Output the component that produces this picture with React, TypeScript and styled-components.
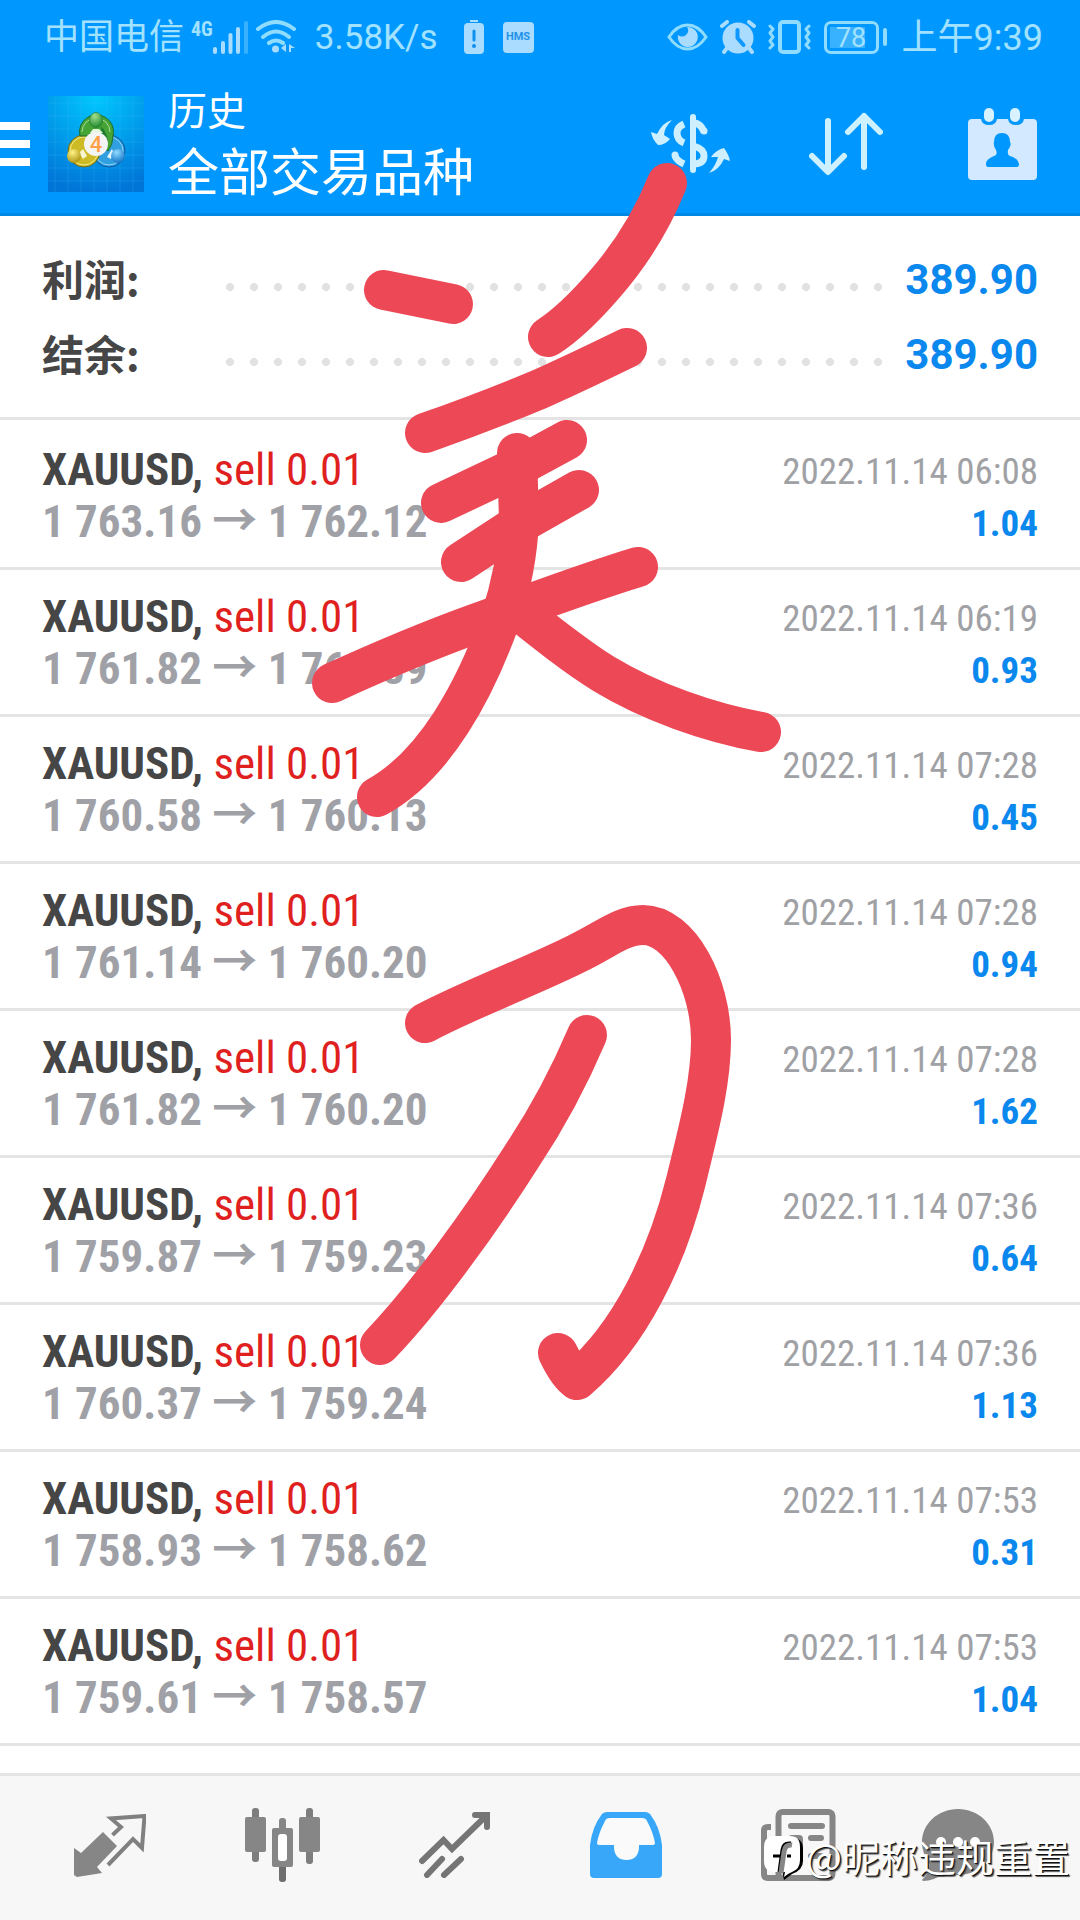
import React from "react";
import styled, { createGlobalStyle } from "styled-components";

const condensed = '"Roboto Condensed", "Liberation Sans Narrow", Roboto, "Noto Sans CJK SC", sans-serif';
const regular = 'Roboto, "Noto Sans CJK SC", sans-serif';

const GlobalStyle = createGlobalStyle`
  *, *::before, *::after { box-sizing: border-box; }
  html, body { margin: 0; padding: 0; }
  body { background: #fff; font-family: ${regular}; }
  button { margin: 0; padding: 0; border: 0; background: none; font: inherit; color: inherit; cursor: pointer; }
  svg { display: block; flex: none; }
`;

const Screen = styled.div`
  position: relative;
  display: flex;
  flex-direction: column;
  height: 100vh;
  overflow: hidden;
`;

const Header = styled.header`
  flex: none;
  background: #0098ff;
  border-bottom: 3px solid #0088e6;
  color: #fff;
`;

const StatusBar = styled.div`
  display: flex;
  align-items: center;
  justify-content: space-between;
  height: 74px;
  padding: 0 37px 0 44px;
  color: #a2e2ff;
  font-size: 36px;
  line-height: 40px;
  font-weight: 400;
`;

const StatusGroup = styled.div`
  display: flex;
  align-items: center;
  gap: 11px;
`;

const StatusIcons = styled.span`
  display: flex;
  align-items: center;
  gap: 12px;
  margin-right: 2px;
`;

const Carrier = styled.span`
  font-size: 35px;
  padding-top: 2px;
`;

const Signal = styled.span`
  display: flex;
  align-items: center;
  margin: 0 -4px 0 -4px;
`;

const Network = styled.span`
  align-self: flex-start;
  font-family: ${condensed};
  font-size: 20px;
  line-height: 18px;
  font-weight: 700;
`;

const Speed = styled.span`
  padding: 2px 15px 0 8px;
  font-size: 35px;
`;

const HmsBadge = styled.span`
  display: grid;
  place-items: center;
  width: 31px;
  height: 31px;
  margin-left: 8px;
  border-radius: 4px;
  background: #a9dcff;
  color: #1f93ea;
  font-size: 11px;
  line-height: 12px;
  font-weight: 700;
`;

const Battery = styled.span`
  display: flex;
  align-items: center;
  gap: 4px;
  &::after {
    content: "";
    width: 4px;
    height: 18px;
    border-radius: 2px;
    background: #8fdcff;
  }
`;

const BatteryCell = styled.span`
  width: 55px;
  height: 33px;
  border: 3px solid #8fdcff;
  border-radius: 7px;
  padding: 0 3px;
  background: linear-gradient(#38b1ff, #38b1ff) 3px 3px / 35px 21px no-repeat;
  text-align: center;
  font-size: 27px;
  line-height: 28px;
`;

const Clock = styled.time`
  margin-left: 4px;
  padding-top: 2px;
  font-size: 36px;
`;

const Toolbar = styled.div`
  display: flex;
  align-items: center;
  height: 139px;
`;

const MenuButton = styled.button`
  display: grid;
  gap: 10px;
  width: 30px;
  margin-right: 18px;
`;

const MenuBar = styled.span`
  height: 8px;
  background: #fff;
`;

const Titles = styled.div`
  display: flex;
  flex-direction: column;
  flex: 1;
  margin-left: 24px;
  padding-top: 4px;
`;

const Subtitle = styled.span`
  font-size: 39px;
  line-height: 56px;
`;

const Title = styled.h1`
  margin: 0;
  font-size: 51px;
  line-height: 68px;
  font-weight: 400;
`;

const Actions = styled.div`
  display: grid;
  grid-template-columns: repeat(3, 156px);
`;

const ActionButton = styled.button`
  display: grid;
  place-items: center;
`;

const Main = styled.main`
  flex: 1;
  min-height: 0;
  overflow: hidden;
`;

const Summary = styled.dl`
  margin: 0;
  padding: 26px 42px 25px;
  border-bottom: 3px solid #e4e4e4;
`;

const SummaryRow = styled.div`
  display: flex;
  align-items: center;
  height: 75px;
  font-size: 42px;
  line-height: 48px;
  font-weight: 700;
`;

const SummaryLabel = styled.dt`
  width: 176px;
  padding-bottom: 4px;
  color: #464646;
  font-family: "Noto Sans CJK SC", sans-serif;
`;

const Dots = styled.span`
  flex: 1;
  height: 8px;
  margin: 15px 16px 0 0;
  background: radial-gradient(circle, #e2e2e2 4px, transparent 4px) 0 0 / 24px 8px repeat-x;
`;

const SummaryValue = styled.dd`
  margin: 0;
  color: #0a88ee;
`;

const Deals = styled.ul`
  margin: 0;
  padding: 3px 0 0;
  list-style: none;
`;

const Deal = styled.li`
  display: flex;
  justify-content: space-between;
  height: 147px;
  padding: 21px 42px 0;
  border-bottom: 3px solid #e4e4e4;
  font-family: ${condensed};
`;

const DealColumn = styled.div<{ $end?: boolean }>`
  display: flex;
  flex-direction: column;
  align-items: ${(p) => (p.$end ? "flex-end" : "flex-start")};
  font-size: ${(p) => (p.$end ? 37 : 45)}px;
  line-height: 52px;
  white-space: nowrap;
  padding-top: ${(p) => (p.$end ? 2 : 0)}px;
`;

const Symbol = styled.span`
  color: #464646;
  font-weight: 700;
`;

const Side = styled.span`
  color: #e01f1f;
`;

const Prices = styled.span`
  color: #a0a1a7;
  font-weight: 700;
`;

const DateText = styled.time`
  color: #a0a1a5;
`;

const Profit = styled.span`
  color: #0a88ee;
  font-weight: 700;
`;

const Nav = styled.nav`
  flex: none;
  display: grid;
  grid-template-columns: repeat(5, 172fr) 148fr;
  height: 147px;
  padding: 0 48px 6px 24px;
  border-top: 3px solid #e4e4e4;
  background: #f7f7f7;
`;

const NavButton = styled.button`
  display: grid;
  place-items: center;
`;

const Drawing = styled.svg`
  position: absolute;
  top: 0;
  left: 0;
  pointer-events: none;
`;

const Watermark = styled.div`
  position: absolute;
  right: 10px;
  bottom: 42px;
  display: flex;
  align-items: center;
  gap: 3px;
  height: 40px;
  color: #fff;
  font-family: "Noto Sans CJK SC", sans-serif;
  font-size: 38px;
  line-height: 40px;
  text-shadow: 1px 1px 0 #111, 2px 2px 1px #555;
`;

const WatermarkText = styled.span`
  padding-bottom: 4px;
`;

const WifiIcon = () => (
  <svg width="40" height="34" viewBox="0 0 40 34" fill="none" stroke="#8fdcff" strokeWidth="4" strokeLinecap="round">
    <path d="M2 9Q20 -5 38 9M7 17Q20 6 33 17M13 23Q20 18 27 23" />
    <circle cx="19.500" cy="29" r="3.500" fill="#a9dcff" stroke="none" />
    <path d="M30 24v8l-5-4zM33 24l6 4h-4v4h-2z" fill="#a9dcff" stroke="none" />
  </svg>
);

const SignalIcon = () => (
  <svg width="36" height="34" viewBox="0 0 36 34" stroke="#a9dcff" strokeWidth="4" strokeLinecap="round">
    <path d="M2 29v3M10 23v9M17.500 15v17M25 9v23" />
    <path d="M33 3v29" stroke="#38b1ff" />
  </svg>
);

const BatteryAlertIcon = () => (
  <svg width="20" height="34" viewBox="0 0 20 34">
    <path d="M6 0h8v2H6z" fill="#a9dcff" />
    <rect x="0" y="3" width="20" height="31" rx="4" fill="#a9dcff" />
    <path d="M10 11v9" stroke="#0f8fee" strokeWidth="3" strokeLinecap="round" />
    <circle cx="10" cy="26" r="2" fill="#0f8fee" />
  </svg>
);

const EyeIcon = () => (
  <svg width="41" height="28" viewBox="0 0 41 28">
    <path d="M2 14Q10 2 20.500 2T39 14Q31 26 20.500 26T2 14Z" fill="none" stroke="#8fdcff" strokeWidth="3" />
    <path d="M20 4a10 10 0 1 1-9 8q4 3 8 0q4-4 1-8z" fill="#a9dcff" />
  </svg>
);

const AlarmIcon = () => (
  <svg width="36" height="34" viewBox="0 0 36 34">
    <path d="M2 6l5-4M34 6l-5-4M7 28l-3 4M29 28l3 4" stroke="#a9dcff" strokeWidth="4" strokeLinecap="round" />
    <circle cx="18" cy="18" r="15.500" fill="#a9dcff" />
    <path d="M17.500 10v8l6 7" fill="none" stroke="#0f98ff" strokeWidth="4" strokeLinecap="round" strokeLinejoin="round" />
  </svg>
);

const VibrateIcon = () => (
  <svg width="43" height="34" viewBox="0 0 43 34" fill="none" stroke="#8fdcff" strokeLinejoin="round" strokeLinecap="round">
    <rect x="12" y="2" width="19" height="30" rx="3" strokeWidth="4" />
    <path d="M2 6l3 3-3 4 3 4-3 4 3 4-3 3M41 6l-3 3 3 4-3 4 3 4-3 4 3 3" strokeWidth="3" />
  </svg>
);

const LogoIcon = () => (
  <svg width="96" height="96" viewBox="0 0 96 96">
    <defs>
      <radialGradient id="sky" cx="50%" cy="0%" r="100%">
        <stop offset="0" stopColor="#00c8ff" />
        <stop offset="1" stopColor="#0075d8" />
      </radialGradient>
      <radialGradient id="green" cx="40%" cy="25%" r="80%">
        <stop offset="0" stopColor="#a5e08e" />
        <stop offset="1" stopColor="#18862a" />
      </radialGradient>
      <radialGradient id="yellow" cx="40%" cy="25%" r="80%">
        <stop offset="0" stopColor="#fff385" />
        <stop offset="1" stopColor="#a88f0c" />
      </radialGradient>
      <radialGradient id="blue" cx="40%" cy="25%" r="80%">
        <stop offset="0" stopColor="#8fdcff" />
        <stop offset="1" stopColor="#0b6fc4" />
      </radialGradient>
    </defs>
    <path d="M0 0h96v96H0z" fill="url(#sky)" />
    <path d="M7 0v96M20 0v96M33 0v96M46 0v96M59 0v96M72 0v96M85 0v96M0 7h96M0 20h96M0 33h96M0 46h96M0 59h96M0 72h96M0 85h96" stroke="#4cc4ff" strokeOpacity=".2" />
    <circle cx="61" cy="55" r="16" fill="#2f9fe0" stroke="#0c579e" />
    <circle cx="61" cy="55" r="14" fill="none" stroke="#8fd3f7" />
    <circle cx="36" cy="55" r="16" fill="#cdbb25" stroke="#6d6a1a" />
    <circle cx="36" cy="55" r="14" fill="none" stroke="#f2ea8a" />
    <path d="M32 40a17 17 0 1 1 33 0q0 8-5 15L42 40z" fill="#46a437" stroke="#1c6d2a" />
    <path d="M34 36a14 14 0 0 1 28 0" fill="none" stroke="#a8de95" />
    <path d="M53 30q8 8 7 22l-6-14z" fill="#1e7a2d" />
    <path d="M45 33h6l4 4H42z" fill="#e3f7dc" />
    <path d="M31 57l4-4 4 7-4 3z" fill="#f7f4d0" />
    <path d="M59 61l5-8 2 5-3 5z" fill="#e3f4fd" />
    <ellipse cx="48" cy="24" rx="6.500" ry="7.500" fill="url(#green)" stroke="#1c6d2a" strokeWidth=".5" />
    <circle cx="26" cy="60" r="7" fill="url(#yellow)" />
    <circle cx="70" cy="60" r="7" fill="url(#blue)" />
    <circle cx="48" cy="48" r="12" fill="#f4f4f5" />
    <text x="48" y="56" textAnchor="middle" fontFamily="Roboto, sans-serif" fontSize="22" fontWeight="500" fill="#ff9f45">4</text>
  </svg>
);

const CurrencyIcon = () => (
  <svg width="79" height="61" viewBox="0 0 79 61" fill="#cdefff">
    <path d="M42 4v53" stroke="#cdefff" strokeWidth="6" strokeLinecap="round" />
    <path d="M33 11Q26 14 26 20Q26 27 33 30M44 10Q50 11 53 19M44 33.500Q53 36 53 43T44 51" fill="none" stroke="#cdefff" strokeWidth="7" />
    <path d="M24 43Q26 48 33 51" fill="none" stroke="#cdefff" strokeWidth="7" />
    <circle cx="24" cy="42" r="3.500" />
    <circle cx="53" cy="18" r="3.500" />
    <path d="M21 7Q13 15 13 22l6 4Q14 32 7 32 1 26 0 19l6 2Q12 9 21 7zM58 60q7-8 9-16l-7 0q5-7 13-9 5 7 6 13l-6-2Q68 57 58 60z" />
  </svg>
);

const SortIcon = () => (
  <svg width="74" height="64" viewBox="0 0 74 64" fill="none" stroke="#cdf1ff" strokeWidth="6" strokeLinecap="round" strokeLinejoin="round">
    <path d="M19 9v50M3 44l16 16 16-16M55 55V4M39 20L55 4l16 16" />
  </svg>
);

const CalendarIcon = () => (
  <svg width="69" height="72" viewBox="0 0 69 72">
    <path d="M4 11h9q1 6 8 6t8-6h11q1 6 8 6t8-6h9q4 0 4 4v53q0 4-4 4H4q-4 0-4-4V15q0-4 4-4z" fill="#d3e9ff" />
    <rect x="16" y="0" width="10" height="14" rx="5" fill="#d8f2ff" />
    <rect x="42" y="0" width="10" height="14" rx="5" fill="#d8f2ff" />
    <path d="M34 25q8 0 8 9 2 3-2 8-1 5 2 6 9 3 9 8 0 3-2 3H20q-2 0-2-3 0-5 8-8 4-1 2-6-3-5-2-8 0-9 8-9z" fill="#0098ff" />
  </svg>
);

const TradeIcon = () => (
  <svg width="72" height="63" viewBox="0 0 72 63">
    <path d="M0 34l7 5 22-21 14 14-20 21 5 6-25 4-3-2z" fill="#868686" />
    <path d="M38.500 21l8.500-8-10-8.500L70.500 2 68 34l-9-9-25 26" fill="none" stroke="#808080" strokeWidth="4" />
  </svg>
);

const CandlesIcon = () => (
  <svg width="75" height="74" viewBox="0 0 75 74" fill="#868686">
    <rect x="7" y="0" width="7" height="54" rx="3" fill="#7d7d7d" />
    <rect x="61" y="0" width="7" height="56" rx="3" fill="#7d7d7d" />
    <rect x="34" y="10" width="7" height="14" rx="3" />
    <rect x="34" y="55" width="7" height="19" rx="3" fill="#6e6e6e" />
    <rect x="0" y="9" width="21" height="35" rx="2" />
    <rect x="54" y="9" width="21" height="35" rx="2" />
    <rect x="27" y="20" width="21" height="39" rx="2" />
    <rect x="33" y="26" width="9" height="27" rx="3" fill="#fff" />
  </svg>
);

const TrendIcon = () => (
  <svg width="71" height="66" viewBox="0 0 71 66" fill="none" stroke="#757575" strokeWidth="6" strokeLinecap="round">
    <path d="M3 49l21.500-21L33 37 68 3M56 3h12v12M8 63l15-16M25 63l17-16" />
  </svg>
);

const InboxIcon = () => (
  <svg width="72" height="66" viewBox="0 0 72 66">
    <path d="M0 33Q2 15 12 2q2-2 5-2h38q3 0 5 2 10 13 12 31v29q0 4-4 4H4q-4 0-4-4z" fill="#38a7fa" />
    <path d="M7 31q2-11 8-22 1-3 5-3h32q4 0 5 3 6 11 8 22 0 2-2 2H49v3q-1 12-12.500 12T24 36v-3H9q-2 0-2-2z" fill="#fafafa" />
  </svg>
);

const NewsIcon = () => (
  <svg width="76" height="72" viewBox="0 0 76 72" fill="none" stroke="#868686" strokeWidth="6">
    <rect x="18.500" y="3" width="54" height="66" rx="4" />
    <path d="M11 18H8q-4 0-4 4v43q0 4 4 4h16" />
    <path d="M31 17h31M51 29h10M51 47h10" strokeLinecap="round" />
    <rect x="31" y="29" width="9" height="18" rx="1" />
  </svg>
);

const ChatIcon = () => (
  <svg width="72" height="72" viewBox="0 0 72 72">
    <path d="M36 0c20 0 36 15 36 33S56 66 36 66q-8 0-14-2-10 8-21 8-2-1 1-3 6-6 6-14Q0 45 0 33C0 15 16 0 36 0z" fill="#868686" />
    <circle cx="19" cy="33" r="5" fill="#fff" />
    <circle cx="36" cy="33" r="5" fill="#fff" />
    <circle cx="53" cy="33" r="5" fill="#fff" />
  </svg>
);

const WatermarkIcon = () => (
  <svg width="39" height="44" viewBox="0 0 39 44">
    <path d="M12 2h16q11 0 11 11v12q0 9-11 13l-8 6-1-5z" fill="#000" />
    <path d="M11 0h15q10 0 10 11v13q0 9-8 12-5 2-8 5l1-5H11Q0 36 0 25V11Q0 0 11 0z" fill="#fff" />
    <path d="M27 7q-8-1-9 7l-3 22M9 20h8M23 20h4" fill="none" stroke="#000" strokeWidth="3" />
    <path d="M28 9q-7-1-8 7l-3 21" fill="none" stroke="#868686" strokeWidth="5" />
  </svg>
);

const actions = [
  { label: "货币", Icon: CurrencyIcon },
  { label: "排序", Icon: SortIcon },
  { label: "日期", Icon: CalendarIcon },
];

const tabs = [
  { label: "报价", Icon: TradeIcon },
  { label: "图表", Icon: CandlesIcon },
  { label: "交易", Icon: TrendIcon },
  { label: "历史", Icon: InboxIcon },
  { label: "新闻", Icon: NewsIcon },
  { label: "聊天", Icon: ChatIcon },
];

const summary = [
  ["利润", "389.90"],
  ["结余", "389.90"],
];

const deals = [
  ["1 763.16", "1 762.12", "2022.11.14 06:08", "1.04"],
  ["1 761.82", "1 760.89", "2022.11.14 06:19", "0.93"],
  ["1 760.58", "1 760.13", "2022.11.14 07:28", "0.45"],
  ["1 761.14", "1 760.20", "2022.11.14 07:28", "0.94"],
  ["1 761.82", "1 760.20", "2022.11.14 07:28", "1.62"],
  ["1 759.87", "1 759.23", "2022.11.14 07:36", "0.64"],
  ["1 760.37", "1 759.24", "2022.11.14 07:36", "1.13"],
  ["1 758.93", "1 758.62", "2022.11.14 07:53", "0.31"],
  ["1 759.61", "1 758.57", "2022.11.14 07:53", "1.04"],
];

const strokes = [
  "M384 290L453 304",
  "M667 183C650 225 626 260 604 285C585 307 565 326 548 337",
  "M425 433Q485 412 540 389Q578 372 627 348",
  "M441 503L519 466L567 440",
  "M461 562L519 524L579 490",
  "M332 683C380 661 430 640 477 623C530 604 585 583 638 567",
  "M517 453L519 520Q517 570 500 620C475 690 435 765 377 797",
  "M515 608C545 632 575 656 604 674C650 702 710 723 761 732",
  "M425 1023C470 999 535 975 580 952C605 940 622 925 643 925C680 925 711 985 711 1040C711 1085 697 1135 686 1181C667 1258 630 1335 577 1380Q568 1374 558 1353",
  "M587 1035C570 1075 548 1117 522 1156C480 1222 425 1298 380 1345",
];

export default function App() {
  return (
    <Screen>
      <GlobalStyle />
      <Header>
        <StatusBar>
          <StatusGroup>
            <Carrier>中国电信</Carrier>
            <Signal>
              <Network>4G</Network>
              <SignalIcon />
            </Signal>
            <WifiIcon />
            <Speed>3.58K/s</Speed>
            <BatteryAlertIcon />
            <HmsBadge>HMS</HmsBadge>
          </StatusGroup>
          <StatusGroup>
            <StatusIcons>
              <EyeIcon />
              <AlarmIcon />
              <VibrateIcon />
            </StatusIcons>
            <Battery>
              <BatteryCell>78</BatteryCell>
            </Battery>
            <Clock>上午9:39</Clock>
          </StatusGroup>
        </StatusBar>
        <Toolbar>
          <MenuButton aria-label="菜单">
            <MenuBar />
            <MenuBar />
            <MenuBar />
          </MenuButton>
          <LogoIcon />
          <Titles>
            <Subtitle>历史</Subtitle>
            <Title>全部交易品种</Title>
          </Titles>
          <Actions>
            {actions.map(({ label, Icon }) => (
              <ActionButton key={label} aria-label={label}>
                <Icon />
              </ActionButton>
            ))}
          </Actions>
        </Toolbar>
      </Header>
      <Main>
        <Summary>
          {summary.map(([label, value]) => (
            <SummaryRow key={label}>
              <SummaryLabel>{label}:</SummaryLabel>
              <Dots />
              <SummaryValue>{value}</SummaryValue>
            </SummaryRow>
          ))}
        </Summary>
        <Deals>
          {deals.map(([open, close, date, profit], i) => (
            <Deal key={i}>
              <DealColumn>
                <span>
                  <Symbol>XAUUSD,</Symbol> <Side>sell 0.01</Side>
                </span>
                <Prices>
                  {open} → {close}
                </Prices>
              </DealColumn>
              <DealColumn $end>
                <DateText>{date}</DateText>
                <Profit>{profit}</Profit>
              </DealColumn>
            </Deal>
          ))}
        </Deals>
      </Main>
      <Nav>
        {tabs.map(({ label, Icon }) => (
          <NavButton key={label} aria-label={label}>
            <Icon />
          </NavButton>
        ))}
      </Nav>
      <Drawing width="1080" height="1420" viewBox="0 0 1080 1420" fill="none" stroke="#ec4856" strokeWidth="40" strokeLinecap="round" strokeLinejoin="round" aria-hidden="true">
        {strokes.map((d) => (
          <path key={d} d={d} />
        ))}
      </Drawing>
      <Watermark>
        <WatermarkIcon />
        <WatermarkText>@昵称违规重置</WatermarkText>
      </Watermark>
    </Screen>
  );
}
